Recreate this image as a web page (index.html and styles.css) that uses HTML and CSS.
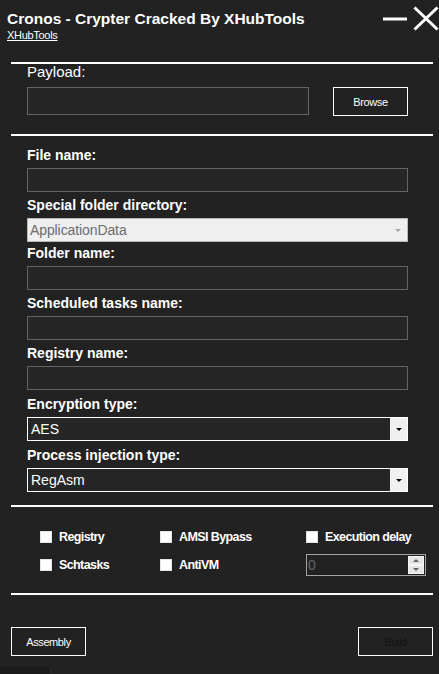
FILE: index.html
```html
<!DOCTYPE html>
<html>
<head>
<meta charset="utf-8">
<link rel="stylesheet" href="styles.css">
</head>
<body>
<div class="window">
  <header class="titlebar">
    <div class="brand">
      <div class="title">Cronos - Crypter Cracked By XHubTools</div>
      <a class="link" href="#">XHubTools</a>
    </div>
    <div class="controls">
      <svg width="57" height="25" viewBox="0 0 57 25">
        <line x1="1" y1="13" x2="25" y2="13" stroke="#fff" stroke-width="3"/>
        <line x1="32.5" y1="1.5" x2="55.5" y2="23.5" stroke="#fff" stroke-width="3"/>
        <line x1="55.5" y1="1.5" x2="32.5" y2="23.5" stroke="#fff" stroke-width="3"/>
      </svg>
    </div>
  </header>
  <div class="rule"></div>

  <section class="payload">
    <div class="payload-label">Payload:</div>
    <div class="payload-row">
      <div class="textbox payload-box"></div>
      <div class="btn browse">Browse</div>
    </div>
  </section>
  <div class="rule rule-2"></div>

  <section class="fields">
    <div class="field">
      <div class="label">File name:</div>
      <div class="textbox"></div>
    </div>
    <div class="field field-tight">
      <div class="label">Special folder directory:</div>
      <div class="combo combo-disabled"><span class="combo-text">ApplicationData</span><span class="tri tri-gray"></span></div>
    </div>
    <div class="field">
      <div class="label">Folder name:</div>
      <div class="textbox"></div>
    </div>
    <div class="field">
      <div class="label">Scheduled tasks name:</div>
      <div class="textbox"></div>
    </div>
    <div class="field field-wide">
      <div class="label">Registry name:</div>
      <div class="textbox"></div>
    </div>
    <div class="field field-wide">
      <div class="label">Encryption type:</div>
      <div class="combo combo-dark"><span class="combo-text">AES</span><span class="drop"><span class="tri"></span></span></div>
    </div>
    <div class="field">
      <div class="label">Process injection type:</div>
      <div class="combo combo-dark"><span class="combo-text">RegAsm</span><span class="drop"><span class="tri"></span></span></div>
    </div>
  </section>
  <div class="rule rule-3"></div>

  <section class="options">
    <label class="check"><span class="box"></span><span>Registry</span></label>
    <label class="check"><span class="box"></span><span>AMSI Bypass</span></label>
    <label class="check"><span class="box"></span><span>Execution delay</span></label>
    <label class="check"><span class="box"></span><span>Schtasks</span></label>
    <label class="check"><span class="box"></span><span>AntiVM</span></label>
    <div class="numeric">
      <span class="num-text">0</span>
      <span class="spin">
        <span class="spin-btn"><span class="tri-up"></span></span>
        <span class="spin-btn"><span class="tri-down"></span></span>
      </span>
    </div>
  </section>
  <div class="rule rule-4"></div>

  <footer class="actions">
    <div class="btn">Assembly</div>
    <div class="btn btn-disabled">Build</div>
  </footer>
  <div class="strip"></div>
</div>
</body>
</html>
```

FILE: styles.css
```css
* { box-sizing: border-box; }
html, body {
  margin: 0;
  padding: 0;
  background: #222222;
}
body {
  font-family: "Liberation Sans", Arial, sans-serif;
  color: #ffffff;
  width: 439px;
  height: 674px;
  overflow: hidden;
}
.window {
  display: flex;
  flex-direction: column;
}
.titlebar {
  height: 62px;
  display: flex;
  justify-content: space-between;
  align-items: flex-start;
}
.brand {
  padding: 10px 0 0 7px;
}
.title {
  font-weight: bold;
  font-size: 15.5px;
  line-height: 18px;
  white-space: nowrap;
}
.link {
  display: block;
  margin-top: 1px;
  font-size: 11px;
  line-height: 13px;
  letter-spacing: -0.3px;
  color: #ffffff;
  text-decoration: underline;
}
.controls {
  margin-top: 6px;
  display: flex;
}
.controls svg { display: block; }
.rule {
  height: 2px;
  background: #ffffff;
  margin: 0 6px 0 11px;
}
.payload {
  padding: 0 31px 0 27px;
}
.payload-label {
  font-size: 15px;
  line-height: 14px;
  margin-top: 1px;
  margin-bottom: 8px;
}
.payload-row {
  display: flex;
  align-items: flex-start;
  gap: 24px;
}
.textbox {
  height: 24px;
  border: 1px solid #646464;
  background: #262626;
}
.payload-box {
  width: 282px;
  height: 28px;
}
.btn {
  width: 75px;
  height: 29px;
  border: 1px solid #ffffff;
  display: flex;
  align-items: center;
  justify-content: center;
  font-size: 11px;
  letter-spacing: -0.4px;
  color: #ffffff;
}
.btn-disabled {
  color: #121212;
}
.rule-2 { margin-top: 18px; }
.fields {
  padding: 11px 31px 0 27px;
  display: flex;
  flex-direction: column;
}
.field {
  display: flex;
  flex-direction: column;
  margin-bottom: 5px;
}
.field:last-child { margin-bottom: 0; }
.field-tight { margin-bottom: 3px; }
.field-wide { margin-bottom: 6px; }
.label {
  font-weight: bold;
  font-size: 14px;
  line-height: 16px;
  margin-bottom: 5px;
  white-space: nowrap;
}
.combo {
  height: 24px;
  display: flex;
  align-items: center;
  font-size: 14px;
}
.combo-text {
  flex: 1;
  padding-left: 3px;
}
.combo-disabled {
  border: 1px solid #b9b9b9;
  background: #efefef;
  color: #6d6d6d;
}
.combo-disabled .combo-text { padding-left: 2px; letter-spacing: -0.1px; }
.combo-dark {
  border: 1px solid #ffffff;
  background: #262626;
  color: #ffffff;
}
.drop {
  width: 17px;
  height: 100%;
  background: #f0f0f0;
  display: flex;
  align-items: center;
  justify-content: center;
}
.tri {
  width: 0;
  height: 0;
  border-left: 3px solid transparent;
  border-right: 3px solid transparent;
  border-top: 3px solid #000000;
}
.tri-gray {
  border-top-color: #a8a8a8;
  margin-right: 6px;
}
.rule-3 { margin-top: 13px; }
.options {
  margin-top: 19px;
  padding-left: 40px;
  display: grid;
  grid-template-columns: 120px 146px 120px;
  grid-auto-rows: 22px;
  row-gap: 6px;
}
.check {
  display: flex;
  align-items: center;
  gap: 7px;
  font-weight: bold;
  font-size: 12.5px;
  letter-spacing: -0.6px;
  white-space: nowrap;
}
.box {
  width: 12px;
  height: 12px;
  background: #ffffff;
  border: 1px solid #e4e4e4;
  flex: none;
}
.numeric {
  width: 120px;
  height: 22px;
  border: 1px solid #a3a3a3;
  background: #222222;
  display: flex;
  align-items: stretch;
}
.num-text {
  flex: 1;
  font-size: 14px;
  line-height: 20px;
  color: #666666;
  padding-left: 1px;
}
.spin {
  width: 16px;
  display: flex;
  flex-direction: column;
  padding: 1px 0 1px 0;
  margin-right: 1px;
}
.spin-btn {
  flex: 1;
  background: #e6e6e6;
  border: 1px solid #f4f4f4;
  display: flex;
  align-items: center;
  justify-content: center;
}
.tri-up {
  width: 0; height: 0;
  border-left: 3px solid transparent;
  border-right: 3px solid transparent;
  border-bottom: 3px solid #606060;
}
.tri-down {
  width: 0; height: 0;
  border-left: 3px solid transparent;
  border-right: 3px solid transparent;
  border-top: 3px solid #606060;
}
.rule-4 { margin-top: 17px; }
.actions {
  margin-top: 32px;
  padding: 0 6px 0 11px;
  display: flex;
  justify-content: space-between;
}
.strip {
  margin-top: 11px;
  width: 51px;
  height: 7px;
  background: #1b1b1b;
  border-right: 1px solid #2c2c2c;
}
```
